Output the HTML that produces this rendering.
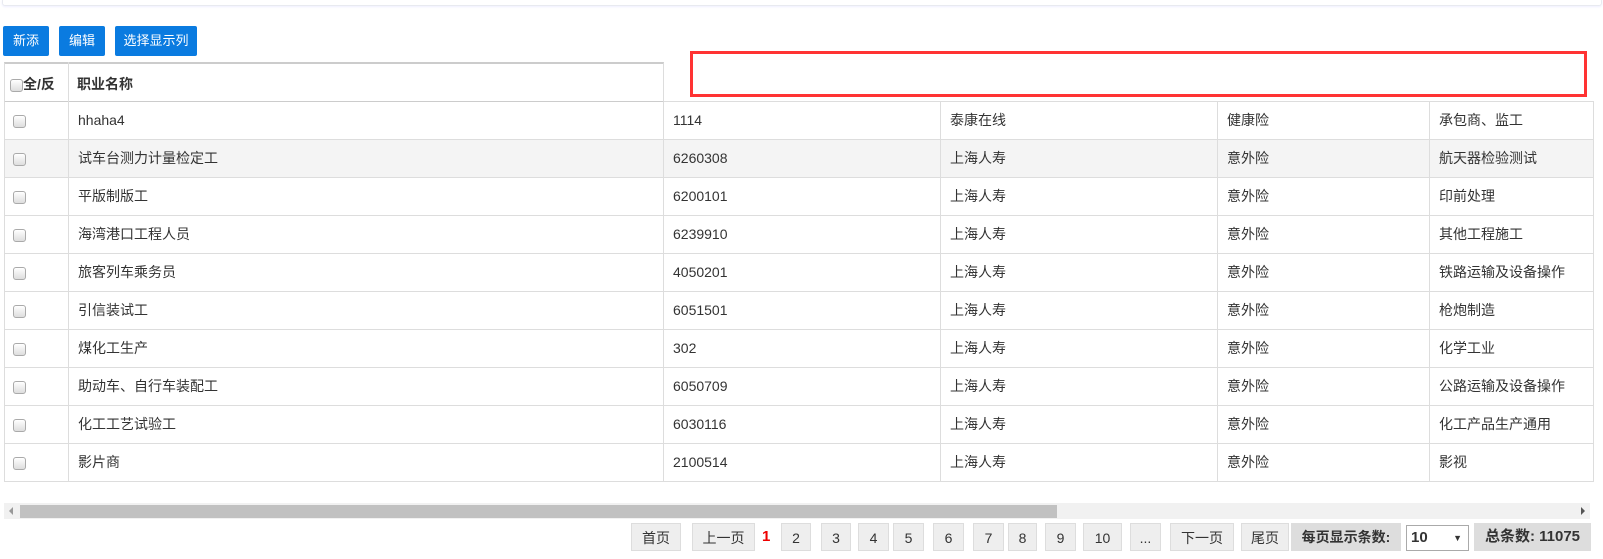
<!DOCTYPE html>
<html><head><meta charset="utf-8"><style>
*{box-sizing:border-box;margin:0;padding:0}
body{width:1603px;height:559px;overflow:hidden;background:#fff;font-family:"Liberation Sans","Noto Sans CJK SC",sans-serif;font-size:14px;color:#333;position:relative}
.top{position:absolute;left:2px;top:-2px;width:1600px;height:8px;border:1px solid #e8eaf0;border-radius:3px;box-shadow:0 1px 2px #eef}
.btn{position:absolute;top:26px;height:30px;background:#0a7be0;color:#fff;font-size:13px;line-height:30px;text-align:center;border-radius:2px}
.cb{display:inline-block;width:13px;height:13px;border:1px solid #aaa;border-radius:3px;background:linear-gradient(#fff,#ddd);vertical-align:middle}
.row{position:absolute;left:4px;width:1590px;height:38px;border-bottom:1px solid #ddd;border-right:1px solid #ddd}
.c{position:absolute;top:0;height:37px;line-height:37px;border-left:1px solid #ddd;padding-left:9px;white-space:nowrap}
.pg{position:absolute;top:523px;height:28px;line-height:28px;background:#eee;border:1px solid #ddd;text-align:center;font-size:14px;color:#333}
</style></head><body>
<div class="top"></div>
<div class="btn" style="left:3px;width:46px">新添</div>
<div class="btn" style="left:59px;width:46px">编辑</div>
<div class="btn" style="left:115px;width:82px">选择显示列</div>
<div style="position:absolute;left:4px;top:62px;width:660px;height:41px;border-top:2px solid #ccc;border-bottom:2px solid #ccc;border-right:1px solid #ddd;border-left:1px solid #ddd"></div>
<div style="position:absolute;left:664px;top:101px;width:930px;border-top:1px solid #ddd"></div>
<div style="position:absolute;left:68px;top:62px;height:41px;border-left:1px solid #ddd"></div>
<div style="position:absolute;left:10px;top:74px;font-weight:bold"><span class="cb"></span>全/反</div>
<div style="position:absolute;left:77px;top:74px;font-weight:bold">职业名称</div>
<div style="position:absolute;left:690px;top:51px;width:897px;height:46px;border:3px solid #f33"></div>
<div id="rows"></div>
<div style="position:absolute;left:4px;top:503px;width:1586px;height:16px;background:#f1f1f1"></div>
<div style="position:absolute;left:20px;top:505px;width:1037px;height:13px;background:#c1c1c1"></div>
<div style="position:absolute;left:9px;top:507px;width:0;height:0;border:4px solid transparent;border-right-color:#999;border-left:0"></div>
<div style="position:absolute;left:1581px;top:507px;width:0;height:0;border:4px solid transparent;border-left-color:#555;border-right:0"></div>
<div class="pg" style="left:631px;width:50px">首页</div>
<div class="pg" style="left:692px;width:63px">上一页</div>
<div style="position:absolute;left:762px;top:523px;line-height:28px;color:#e00;font-weight:bold;font-size:15px">1</div>
<div class="pg" style="left:781px;width:30px">2</div>
<div class="pg" style="left:821px;width:30px">3</div>
<div class="pg" style="left:858px;width:31px">4</div>
<div class="pg" style="left:893px;width:31px">5</div>
<div class="pg" style="left:933px;width:31px">6</div>
<div class="pg" style="left:973px;width:31px">7</div>
<div class="pg" style="left:1008px;width:29px">8</div>
<div class="pg" style="left:1045px;width:31px">9</div>
<div class="pg" style="left:1083px;width:39px">10</div>
<div class="pg" style="left:1130px;width:31px">...</div>
<div class="pg" style="left:1170px;width:64px">下一页</div>
<div class="pg" style="left:1241px;width:48px">尾页</div>
<div class="pg" style="left:1291px;width:110px;background:#ddd;border:none;font-weight:bold">每页显示条数:</div>
<div style="position:absolute;left:1406px;top:525px;width:63px;height:26px;border:1px solid #aaa;font-weight:bold;font-size:15px;line-height:24px;padding-left:4px">10<span style="position:absolute;right:6px;font-size:9px">▼</span></div>
<div class="pg" style="left:1474px;width:117px;background:#ddd;border:none;font-weight:bold;font-size:15px">总条数: 11075</div>
<script>
var d=[["hhaha4","1114","泰康在线","健康险","承包商、监工"],["试车台测力计量检定工","6260308","上海人寿","意外险","航天器检验测试"],["平版制版工","6200101","上海人寿","意外险","印前处理"],["海湾港口工程人员","6239910","上海人寿","意外险","其他工程施工"],["旅客列车乘务员","4050201","上海人寿","意外险","铁路运输及设备操作"],["引信装试工","6051501","上海人寿","意外险","枪炮制造"],["煤化工生产","302","上海人寿","意外险","化学工业"],["助动车、自行车装配工","6050709","上海人寿","意外险","公路运输及设备操作"],["化工工艺试验工","6030116","上海人寿","意外险","化工产品生产通用"],["影片商","2100514","上海人寿","意外险","影视"]];
var x=[0,64,659,936,1213,1425],h="";
d.forEach(function(r,i){h+='<div class="row" style="top:'+(102+i*38)+'px;background:'+(i==1?'#f4f4f4':'#fff')+'"><div class="c" style="left:0;width:64px;padding-left:8px"><span class="cb"></span></div>';
r.forEach(function(t,j){h+='<div class="c" style="left:'+x[j+1]+'px">'+t+'</div>'});h+='</div>'});
document.getElementById('rows').innerHTML=h;
</script>
</body></html>
